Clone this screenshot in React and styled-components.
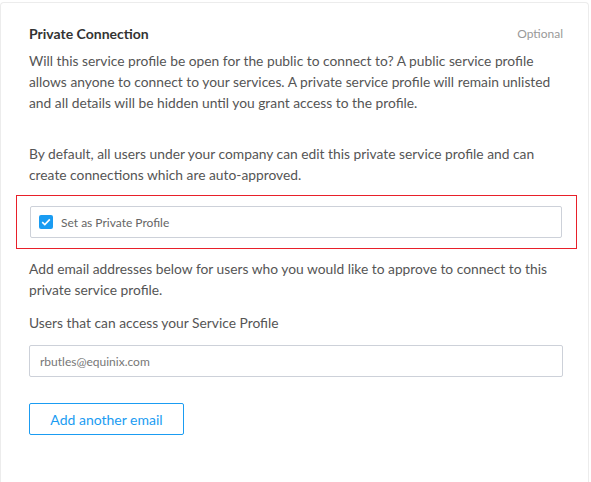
import React from "react";
import styled, { createGlobalStyle } from "styled-components";

const Global = createGlobalStyle`
  html, body { margin: 0; padding: 0; background: #fff; }
  body { font-family: Lato, "Open Sans", sans-serif; -webkit-font-smoothing: antialiased; }
`;

const Card = styled.div`
  box-sizing: border-box;
  margin: 2px 2px 0 0;
  min-height: 480px;
  border: 1px solid #ececec;
  border-bottom: none;
  border-radius: 4px 4px 0 0;
  padding: 21px 25px 40px 28px;
`;

const Header = styled.div`
  display: flex;
  justify-content: space-between;
  align-items: center;
  height: 18px;
`;

const Title = styled.h3`
  margin: 0;
  font-size: 14px;
  font-weight: 700;
  color: #333;
`;

const Optional = styled.span`
  font-size: 12px;
  color: #999;
`;

const Para = styled.p`
  margin: ${(p) => p.$mt || 0}px 0 0;
  font-size: 13.8px;
  line-height: 21px;
  color: #555;
`;

const Highlight = styled.div`
  margin: 10px -14px 0 -13px;
  border: 1px solid #e8202a;
  padding: 10px 14px 10px 13px;
`;

const FieldBox = styled.label`
  box-sizing: border-box;
  display: flex;
  align-items: center;
  gap: 8px;
  height: 32px;
  padding: 0 8px;
  border: 1px solid #cdd1d9;
  border-radius: 2px;
  font-size: 12px;
  color: #666;
`;

const CheckBox = styled.span`
  width: 14px;
  height: 14px;
  border-radius: 2px;
  background: #1a9cf2;
  display: flex;
  align-items: center;
  justify-content: center;
`;

const Input = styled.input`
  box-sizing: border-box;
  display: block;
  width: 100%;
  height: 32px;
  margin-top: 12px;
  padding: 0 10px;
  border: 1px solid #cdd1d9;
  border-radius: 2px;
  font-family: inherit;
  font-size: 12px;
  color: #555;
  outline: none;
  &::placeholder { color: #777; }
`;

const Button = styled.button`
  box-sizing: border-box;
  margin-top: 26px;
  width: 155px;
  height: 32px;
  border: 1px solid #1a9cf2;
  border-radius: 2px;
  background: #fff;
  color: #1a9cf2;
  font-family: inherit;
  font-size: 14px;
  cursor: pointer;
`;

export default function App() {
  return (
    <>
      <Global />
      <Card>
        <Header>
          <Title>Private Connection</Title>
          <Optional>Optional</Optional>
        </Header>
        <Para $mt={8}>
          Will this service profile be open for the public to connect to? A public service profile
          allows anyone to connect to your services. A private service profile will remain unlisted
          and all details will be hidden until you grant access to the profile.
        </Para>
        <Para $mt={30}>
          By default, all users under your company can edit this private service profile and can
          create connections which are auto-approved.
        </Para>
        <Highlight>
          <FieldBox>
            <CheckBox>
              <svg width="10" height="8" viewBox="0 0 10 8">
                <path d="M1.2 4.2 L3.8 6.6 L8.8 1.4" fill="none" stroke="#fff" strokeWidth="1.6" />
              </svg>
            </CheckBox>
            Set as Private Profile
          </FieldBox>
        </Highlight>
        <Para $mt={9}>
          Add email addresses below for users who you would like to approve to connect to this
          private service profile.
        </Para>
        <Para $mt={12}>Users that can access your Service Profile</Para>
        <Input placeholder="rbutles@equinix.com" />
        <Button>Add another email</Button>
      </Card>
    </>
  );
}
